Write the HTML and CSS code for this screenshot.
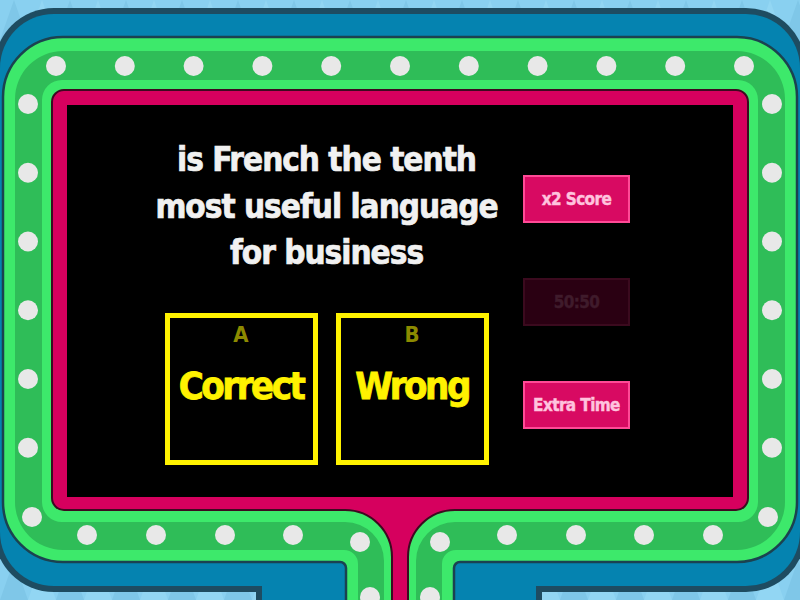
FILE: index.html
```html
<!DOCTYPE html>
<html lang="en">
<head>
<meta charset="utf-8">
<title>Quiz</title>
<link rel="stylesheet" href="styles.css">
</head>
<body>
<div class="stage">
  <svg class="frame" width="800" height="600" viewBox="0 0 800 600" xmlns="http://www.w3.org/2000/svg">
    <defs>
      <pattern id="tri" width="56" height="40" patternUnits="userSpaceOnUse">
        <rect width="56" height="40" fill="#89d0f0"/>
        <polygon points="0,40 14,0 28,40" fill="#7fc7e8"/>
        <polygon points="28,40 42,0 56,40" fill="#92d6f3"/>
      </pattern>
    </defs>
    <rect width="800" height="600" fill="url(#tri)"/>
    <!-- blue outer frame -->
    <rect x="-6" y="8" width="812" height="584" rx="60" fill="#1e4c61"/>
    <rect x="256" y="560" width="286" height="50" fill="#1e4c61"/>
    <rect x="0" y="14" width="800" height="572" rx="54" fill="#0583b0"/>
    <rect x="262" y="560" width="274" height="50" fill="#0583b0"/>
    <!-- green ring -->
    <path fill="#3de96b" stroke="#1b4250" stroke-width="2.5" d="M63,37 H737 A60,60 0 0 1 797,97 V502 A60,60 0 0 1 737,562 H460 A6,6 0 0 0 454,568 V610 H346 V568 A6,6 0 0 0 340,562 H63 A60,60 0 0 1 3,502 V97 A60,60 0 0 1 63,37 Z"/>
    <path fill="#2fbd58" d="M63,51 H737 A48,48 0 0 1 785,99 V502 A48,48 0 0 1 737,550 H456 A14,14 0 0 0 442,564 V610 H358 V564 A14,14 0 0 0 344,550 H63 A48,48 0 0 1 15,502 V99 A48,48 0 0 1 63,51 Z"/>
    <path fill="#3de96b" d="M62,80 H738 A20,20 0 0 1 758,100 V502 A20,20 0 0 1 738,522 H455 A39,39 0 0 0 416,561 V610 H384 V561 A39,39 0 0 0 345,522 H62 A20,20 0 0 1 42,502 V100 A20,20 0 0 1 62,80 Z"/>
    <!-- lights -->
    <g fill="#e8e8e8">
      <circle cx="56" cy="66" r="10"/><circle cx="124.8" cy="66" r="10"/><circle cx="193.6" cy="66" r="10"/>
      <circle cx="262.4" cy="66" r="10"/><circle cx="331.2" cy="66" r="10"/><circle cx="400" cy="66" r="10"/>
      <circle cx="468.8" cy="66" r="10"/><circle cx="537.6" cy="66" r="10"/><circle cx="606.4" cy="66" r="10"/>
      <circle cx="675.2" cy="66" r="10"/><circle cx="744" cy="66" r="10"/>
      <circle cx="28" cy="104" r="10"/><circle cx="28" cy="172.8" r="10"/><circle cx="28" cy="241.5" r="10"/>
      <circle cx="28" cy="310.3" r="10"/><circle cx="28" cy="379" r="10"/><circle cx="28" cy="447.8" r="10"/>
      <circle cx="32" cy="517" r="10"/>
      <circle cx="772" cy="104" r="10"/><circle cx="772" cy="172.8" r="10"/><circle cx="772" cy="241.5" r="10"/>
      <circle cx="772" cy="310.3" r="10"/><circle cx="772" cy="379" r="10"/><circle cx="772" cy="447.8" r="10"/>
      <circle cx="768" cy="517" r="10"/>
      <circle cx="87" cy="535" r="10"/><circle cx="156" cy="535" r="10"/><circle cx="225" cy="535" r="10"/>
      <circle cx="293" cy="535" r="10"/>
      <circle cx="507" cy="535" r="10"/><circle cx="576" cy="535" r="10"/><circle cx="644" cy="535" r="10"/>
      <circle cx="713" cy="535" r="10"/>
      <circle cx="360" cy="542" r="10"/><circle cx="370" cy="597" r="10"/>
      <circle cx="440" cy="542" r="10"/><circle cx="430" cy="597" r="10"/>
    </g>
    <!-- pink screen border -->
    <path fill="#d6005e" stroke="#3d0a20" stroke-width="2" d="M64,90 H736 A12,12 0 0 1 748,102 V498 A12,12 0 0 1 736,510 H455 A47,47 0 0 0 408,557 V610 H392 V557 A47,47 0 0 0 345,510 H64 A12,12 0 0 1 52,498 V102 A12,12 0 0 1 64,90 Z"/>
    <rect x="67" y="105" width="666" height="392" fill="#000"/>
  </svg>
  <div class="screen">
    <div class="left">
      <div class="question">is French the tenth<br>most useful language<br>for business</div>
      <div class="answers">
        <div class="answer"><span class="letter">A</span><span class="text">Correct</span></div>
        <div class="answer"><span class="letter">B</span><span class="text">Wrong</span></div>
      </div>
    </div>
    <div class="powerups">
      <div class="pu">x2 Score</div>
      <div class="pu off">50:50</div>
      <div class="pu">Extra Time</div>
    </div>
  </div>
</div>
</body>
</html>
```
FILE: styles.css
```css
html, body {
  margin: 0;
  padding: 0;
  background: #89d0f0;
}
.stage {
  display: grid;
  width: 800px;
  height: 600px;
  overflow: hidden;
  font-family: "DejaVu Sans Condensed", "DejaVu Sans", sans-serif;
  font-weight: 700;
}
.frame, .screen {
  grid-area: 1 / 1;
}
.frame {
  display: block;
}
.screen {
  display: flex;
  align-items: flex-start;
  padding: 137px 0 0 130px;
}
.left {
  width: 393px;
  display: flex;
  flex-direction: column;
  align-items: center;
}
.question {
  color: #f1f1f1;
  -webkit-text-stroke: 0.7px #f1f1f1;
  font-size: 33px;
  letter-spacing: -1px;
  line-height: 46.5px;
  text-align: center;
  white-space: nowrap;
}
.answers {
  display: flex;
  gap: 18px;
  margin-top: 36px;
}
.answer {
  width: 153px;
  height: 152px;
  box-sizing: border-box;
  border: 5px solid #fff200;
  display: flex;
  flex-direction: column;
  align-items: center;
}
.letter {
  color: #8c8a00;
  font-size: 22px;
  line-height: 24px;
  padding-top: 5px;
}
.text {
  color: #fff200;
  -webkit-text-stroke: 0.8px #fff200;
  font-size: 38px;
  letter-spacing: -2.5px;
  line-height: 50px;
  margin-top: 14px;
  white-space: nowrap;
}
.powerups {
  width: 107px;
  margin-top: 38px;
  display: flex;
  flex-direction: column;
  gap: 55px;
}
.pu {
  height: 48px;
  box-sizing: border-box;
  border: 2px solid #ff4a96;
  background: #d80a62;
  color: #ffc3de;
  -webkit-text-stroke: 0.4px #ffc3de;
  font-size: 17px;
  letter-spacing: -0.6px;
  white-space: nowrap;
  display: flex;
  align-items: center;
  justify-content: center;
}
.pu.off {
  background: #2a0012;
  border-color: #3b0a1e;
  color: #3f1b2b;
  -webkit-text-stroke: 0.4px #3f1b2b;
}
```
